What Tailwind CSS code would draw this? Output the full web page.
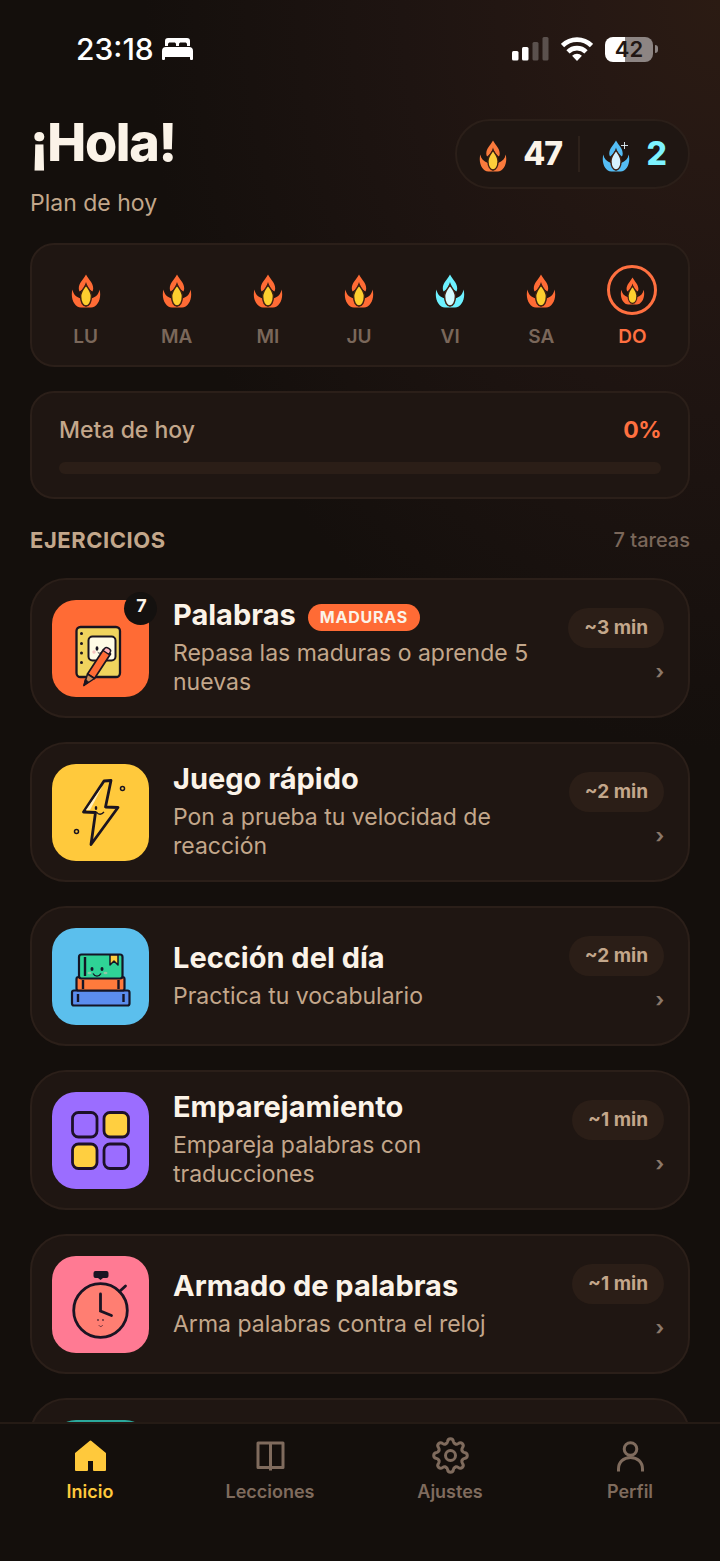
<!DOCTYPE html>
<html lang="es">
<head>
<meta charset="utf-8">
<meta name="viewport" content="width=device-width, initial-scale=1">
<title>Plan de hoy</title>
<script src="https://cdn.jsdelivr.net/npm/@tailwindcss/browser@4"></script>
</head>
<body class="flex h-dvh flex-col overflow-hidden bg-[#140f0c] bg-[radial-gradient(ellipse_80%_48%_at_100%_0%,#2b1b13_0%,#261813_22%,#1e1411_55%,#140f0c_100%)] font-['Inter','Liberation_Sans',sans-serif] text-[#fbf3e8]">

<svg class="hidden" aria-hidden="true">
  <symbol id="flame" viewBox="0 0 30 34">
    <path fill="currentColor" d="M15 .5C12 6 7.800 9 7.800 14.500c0 1.200.3 2.200.9 3C12 15.500 14 12.500 15 8c1 4.500 3 7.500 6.300 9.500.6-.8.9-1.800.9-3C22.200 9 18 6 15 .5Z"/>
    <path fill="currentColor" d="M1.500 15.500C-1 24 3.500 33.500 10 33.500h10c6.500 0 11-9.500 8.500-18-.6 4.500-3.500 7.500-8 9L15 33l-5.500-8.500c-4.500-1.500-7.400-4.500-8-9Z"/>
    <path d="M15 11c2.300 3.500 5.400 6.500 5.400 11.500 0 5.500-2.300 9.500-5.400 9.500s-5.400-4-5.400-9.500c0-5 3.100-8 5.400-11.500Z" stroke="#3f2012" stroke-width="1.500"/>
  </symbol>
</svg>

<header class="flex h-24 shrink-0 items-center justify-between pt-0.5 pr-[62px] pl-[76px] text-white">
  <div class="flex items-center gap-2">
    <time class="text-[30px] leading-9 font-medium">23:18</time>
    <svg class="h-[22px] w-[31px]" viewBox="0 0 31 22" fill="#fff" role="img" aria-label="Modo descanso">
      <path d="M3 8V3a3 3 0 0 1 3-3h19a3 3 0 0 1 3 3v5h-3V6.500C25 5 24 4.500 23 4.500h-4c-1.200 0-2 .5-2 2V8h-3V6.500c0-1.500-.8-2-2-2H8c-1 0-2 .5-2 2V8Z"/>
      <path d="M4 9h23a4 4 0 0 1 4 4v8a1 1 0 0 1-1 1h-1a1 1 0 0 1-1-1v-2H3v2a1 1 0 0 1-1 1H1a1 1 0 0 1-1-1v-8a4 4 0 0 1 4-4Z"/>
    </svg>
  </div>
  <div class="flex items-center gap-3">
    <svg class="h-6 w-[37px]" viewBox="0 0 37 24" fill="#fff" role="img" aria-label="Cobertura">
      <rect x="0" y="14" width="6.500" height="9.500" rx="1.500"/><rect x="10" y="10" width="6.500" height="13.500" rx="1.500"/>
      <rect x="20.500" y="5" width="6" height="18.500" rx="1.500" opacity=".25"/><rect x="30.500" y="0" width="6" height="23.500" rx="1.500" opacity=".25"/>
    </svg>
    <svg class="h-6 w-8" viewBox="0 0 32 24" fill="none" stroke="#fff" stroke-width="4.600" role="img" aria-label="Wifi">
      <path d="M1.500 8.600a20.500 20.500 0 0 1 29 0"/><path d="M7 14.800a12.800 12.800 0 0 1 18 0"/>
      <path d="M16 24l-4.900-5.300a7 7 0 0 1 9.800 0Z" fill="#fff" stroke="none"/>
    </svg>
    <div class="flex items-center gap-0.5">
      <span class="flex h-[25px] w-12 items-center justify-center rounded-lg bg-[linear-gradient(90deg,#fff_42%,#8d8583_42%)] text-[22px] leading-6 font-semibold text-[#211714]">42</span>
      <span class="h-2 w-[3px] rounded-r-full bg-[#8d8583]"></span>
    </div>
  </div>
</header>

<main class="min-h-0 flex-1 overflow-y-auto px-[30px] pt-[23px] [scrollbar-width:none]">
  <div class="flex items-start justify-between">
    <div>
      <h1 class="text-[52px] leading-12 font-extrabold tracking-tight">¡Hola!</h1>
      <p class="mt-5 text-[23px] leading-8 text-[#c3a78b]">Plan de hoy</p>
    </div>
    <div class="flex h-[70px] items-center rounded-full border-2 border-[#2b1f19] bg-[#1f1612] px-[22px] text-[32px] leading-10 font-extrabold tracking-tight">
      <svg class="mt-1 h-8 w-7 text-[#fb7a3c]" fill="#fdcf3b" aria-hidden="true"><use href="#flame"/></svg>
      <span class="ml-4">47</span>
      <span class="mx-4 h-9 w-0.5 bg-[#2d211a]"></span>
      <span class="relative mt-1 ml-1.5">
        <svg class="h-8 w-7 text-[#54bdf5]" fill="#d5f2ff" aria-hidden="true"><use href="#flame"/></svg>
        <svg class="absolute top-0.5 right-0.5 size-[7px]" viewBox="0 0 8 8" stroke="#e9f8ff" aria-hidden="true"><path d="M4 0v8M0 4h8"/></svg>
      </span>
      <span class="ml-4 text-[#7df3ff]">2</span>
    </div>
  </div>

  <section aria-label="Racha semanal" class="mt-6 rounded-[24px] border-2 border-[#2b1f19] bg-[#1f1612] pt-5 pr-2.5 pb-4 pl-2">
    <ol class="grid grid-cols-7 text-center text-[19px] leading-6 font-semibold text-[#7a675a]">
      <li class="flex flex-col items-center gap-2.5"><span class="flex size-[50px] items-center justify-center pt-0.5"><svg class="h-[34px] w-[30px] text-[#ff6b35]" fill="#fdcf2f" aria-hidden="true"><use href="#flame"/></svg></span>LU</li>
      <li class="flex flex-col items-center gap-2.5"><span class="flex size-[50px] items-center justify-center pt-0.5"><svg class="h-[34px] w-[30px] text-[#ff6b35]" fill="#fdcf2f" aria-hidden="true"><use href="#flame"/></svg></span>MA</li>
      <li class="flex flex-col items-center gap-2.5"><span class="flex size-[50px] items-center justify-center pt-0.5"><svg class="h-[34px] w-[30px] text-[#ff6b35]" fill="#fdcf2f" aria-hidden="true"><use href="#flame"/></svg></span>MI</li>
      <li class="flex flex-col items-center gap-2.5"><span class="flex size-[50px] items-center justify-center pt-0.5"><svg class="h-[34px] w-[30px] text-[#ff6b35]" fill="#fdcf2f" aria-hidden="true"><use href="#flame"/></svg></span>JU</li>
      <li class="flex flex-col items-center gap-2.5"><span class="flex size-[50px] items-center justify-center pt-0.5"><svg class="h-[34px] w-[30px] text-[#6df1ff]" fill="#d4fbff" aria-hidden="true"><use href="#flame"/></svg></span>VI</li>
      <li class="flex flex-col items-center gap-2.5"><span class="flex size-[50px] items-center justify-center pt-0.5"><svg class="h-[34px] w-[30px] text-[#ff6b35]" fill="#fdcf2f" aria-hidden="true"><use href="#flame"/></svg></span>SA</li>
      <li class="flex flex-col items-center gap-2.5 text-[#ff7040]"><span class="flex size-[50px] items-center justify-center rounded-full border-3 border-[#ff7040] pt-0.5"><svg class="h-7 w-[25px] text-[#ff6b35]" fill="#fdcf2f" aria-hidden="true"><use href="#flame"/></svg></span>DO</li>
    </ol>
  </section>

  <section class="mt-6 rounded-[24px] border-2 border-[#2b1f19] bg-[#1f1612] px-[27px] pt-[21px] pb-[23px]">
    <div class="flex items-center justify-between text-[23px] leading-8">
      <h2 id="goal" class="font-medium text-[#c3a78b]">Meta de hoy</h2>
      <span class="font-bold tracking-tight text-[#ff7040]">0%</span>
    </div>
    <div role="progressbar" aria-labelledby="goal" aria-valuenow="0" aria-valuemin="0" aria-valuemax="100" class="mt-4 h-3 rounded-full bg-[#2b1e17]"></div>
  </section>

  <div class="mt-[25px] flex items-center justify-between leading-8">
    <h2 class="text-[22px] font-bold tracking-wide text-[#c3a78b]">EJERCICIOS</h2>
    <span class="text-xl font-medium text-[#7a675a]">7 tareas</span>
  </div>

  <ul class="mt-[22px] flex flex-col gap-6">
    <li>
      <a href="#palabras" class="flex min-h-[140px] items-center gap-6 rounded-[36px] border-2 border-[#2b1f19] bg-[#1f1612] pr-6 pl-5">
        <span class="relative size-[97px] shrink-0 rounded-[24px] bg-[#ff6b35]">
          <svg class="size-full" viewBox="0 0 97 97" aria-hidden="true" stroke="#1a1420" stroke-linejoin="round" stroke-linecap="round">
            <rect x="24.500" y="27" width="43.500" height="50" rx="4" fill="#f0d45e" stroke-width="2.300"/>
            <g fill="#1a1420" stroke="none"><circle cx="29.500" cy="33.500" r="1.500"/><circle cx="29.500" cy="43.500" r="1.500"/><circle cx="29.500" cy="53" r="1.500"/><circle cx="29.500" cy="62.500" r="1.500"/></g>
            <rect x="36.500" y="36.500" width="27" height="24" rx="4" fill="#fffbe6" stroke-width="2"/>
            <ellipse cx="45" cy="48.500" rx="1.400" ry="2.200" fill="#1a1420" stroke="none"/><circle cx="42" cy="52" r="1.700" fill="#f7c3c0" stroke="none"/><path d="M46 52.500c1 1 2 1 3 0" fill="none" stroke-width=".9"/>
            <path d="m51.500 49.500 7 4.500-16 24.500-7-4.500Z" fill="#ff6b35" stroke-width="1.700"/>
            <path d="m51 50.500 2-2.500c1.500-1.500 6.500 1.200 5.500 3.500L57 54.500Z" fill="#ffb3ba" stroke-width="1.500"/>
            <path d="m35.500 74 7 4.500L32 85.500Z" fill="#c98a5a" stroke-width="1.500"/><path d="m33.500 79.500 3 2.500-4.500 3.500Z" fill="#1a1420"/>
          </svg>
          <span class="absolute -top-2 -right-2 flex size-[33px] items-start justify-center rounded-full bg-[#14110f] pt-0.5 pl-0.5 text-lg leading-6 font-bold">7</span>
        </span>
        <span class="min-w-0 flex-1 pb-0.5">
          <span class="flex items-center gap-3"><strong class="text-[29px] leading-9 font-bold">Palabras</strong><span class="mt-1 rounded-full bg-[#ff6b35] px-3 text-base leading-[27px] font-bold tracking-wider">MADURAS</span></span>
          <span class="mt-1.5 block text-[23px] leading-[29px] text-[#c3a78b]">Repasa las maduras o aprende 5 nuevas</span>
        </span>
        <span class="flex shrink-0 flex-col items-end gap-3.5 pb-1.5"><span class="rounded-full bg-[#2b1e17] px-4 text-[19px] leading-10 font-bold text-[#c3a78b]">~3 min</span><span class="text-xl leading-5 font-bold text-[#8b7869]">›</span></span>
      </a>
    </li>
    <li>
      <a href="#juego" class="flex min-h-[140px] items-center gap-6 rounded-[36px] border-2 border-[#2b1f19] bg-[#1f1612] pr-6 pl-5">
        <span class="size-[97px] shrink-0 rounded-[24px] bg-[#ffc93c]">
          <svg class="size-full" viewBox="0 0 97 97" aria-hidden="true" fill="none" stroke="#1a1420" stroke-linejoin="round">
            <path d="m52 17 7-.5L53.500 43 66 43.500 39 80.500l4.500-32L31.500 48Z" fill="#ffc93c" stroke-width="2.800"/>
            <path d="M50.500 22 34 46h4Z" fill="#ffefbd" stroke="none"/>
            <ellipse cx="44" cy="44" rx="1.300" ry="2" fill="#1a1420" stroke="none"/><path d="M44.500 48c2 3 5 3 7.500 0" stroke-width="1.300"/>
            <circle cx="70.500" cy="24.500" r="2" stroke-width="1.500"/><circle cx="24.500" cy="67.500" r="2" stroke-width="1.500"/>
          </svg>
        </span>
        <span class="min-w-0 flex-1 pb-0.5">
          <strong class="block text-[29px] leading-9 font-bold">Juego rápido</strong>
          <span class="mt-1.5 block text-[23px] leading-[29px] text-[#c3a78b]">Pon a prueba tu velocidad de reacción</span>
        </span>
        <span class="flex shrink-0 flex-col items-end gap-3.5 pb-1.5"><span class="rounded-full bg-[#2b1e17] px-4 text-[19px] leading-10 font-bold text-[#c3a78b]">~2 min</span><span class="text-xl leading-5 font-bold text-[#8b7869]">›</span></span>
      </a>
    </li>
    <li>
      <a href="#leccion" class="flex min-h-[140px] items-center gap-6 rounded-[36px] border-2 border-[#2b1f19] bg-[#1f1612] pr-6 pl-5">
        <span class="size-[97px] shrink-0 rounded-[24px] bg-[#5bbfed]">
          <svg class="size-full" viewBox="0 0 97 97" aria-hidden="true" stroke="#141526" stroke-width="2.200" stroke-linejoin="round">
            <rect x="20" y="62.500" width="57.500" height="15" rx="2" fill="#5b8def"/><path d="M26 66v8M71.500 66v8" stroke-width="2.400"/>
            <rect x="24.500" y="49" width="48" height="13.500" rx="2" fill="#ff7a3c"/><path d="M31 52v9M66.500 52v9" stroke-width="2.400"/>
            <rect x="27" y="26.500" width="43.500" height="24" rx="2.500" fill="#2fd396"/><path d="M33 29v19" stroke-width="2.400"/>
            <path d="M58 27v10l4-4 4 4V27Z" fill="#ffcf40" stroke-width="1.500"/>
            <g stroke="none"><ellipse cx="40" cy="41" rx="1.500" ry="2" fill="#141526"/><ellipse cx="50" cy="41" rx="1.500" ry="2" fill="#141526"/><ellipse cx="37.500" cy="45" rx="2" ry="1.300" fill="#8fc7a5"/><ellipse cx="53.500" cy="45" rx="2" ry="1.300" fill="#8fc7a5"/></g>
            <path d="M41 45.500c2 3.500 6 3.500 8 0" fill="none" stroke-width="1.400"/>
          </svg>
        </span>
        <span class="min-w-0 flex-1 pb-0.5">
          <strong class="block text-[29px] leading-9 font-bold">Lección del día</strong>
          <span class="mt-1.5 block text-[23px] leading-[29px] text-[#c3a78b]">Practica tu vocabulario</span>
        </span>
        <span class="flex shrink-0 flex-col items-end gap-3.5 pb-1.5"><span class="rounded-full bg-[#2b1e17] px-4 text-[19px] leading-10 font-bold text-[#c3a78b]">~2 min</span><span class="text-xl leading-5 font-bold text-[#8b7869]">›</span></span>
      </a>
    </li>
    <li>
      <a href="#emparejamiento" class="flex min-h-[140px] items-center gap-6 rounded-[36px] border-2 border-[#2b1f19] bg-[#1f1612] pr-6 pl-5">
        <span class="size-[97px] shrink-0 rounded-[24px] bg-[#9b6dff]">
          <svg class="size-full" viewBox="0 0 97 97" aria-hidden="true" fill="none" stroke="#1d1029" stroke-width="2.800">
            <rect x="20.500" y="20.500" width="24.500" height="24.500" rx="6"/><rect x="52" y="20.500" width="24.500" height="24.500" rx="6" fill="#ffcf40"/>
            <rect x="20.500" y="52" width="24.500" height="24.500" rx="6" fill="#ffcf40"/><rect x="52" y="52" width="24.500" height="24.500" rx="6"/>
          </svg>
        </span>
        <span class="min-w-0 flex-1 pb-0.5">
          <strong class="block text-[29px] leading-9 font-bold">Emparejamiento</strong>
          <span class="mt-1.5 block text-[23px] leading-[29px] text-[#c3a78b]">Empareja palabras con traducciones</span>
        </span>
        <span class="flex shrink-0 flex-col items-end gap-3.5 pb-1.5"><span class="rounded-full bg-[#2b1e17] px-4 text-[19px] leading-10 font-bold text-[#c3a78b]">~1 min</span><span class="text-xl leading-5 font-bold text-[#8b7869]">›</span></span>
      </a>
    </li>
    <li>
      <a href="#armado" class="flex min-h-[140px] items-center gap-6 rounded-[36px] border-2 border-[#2b1f19] bg-[#1f1612] pr-6 pl-5">
        <span class="size-[97px] shrink-0 rounded-[24px] bg-[#ff7a93]">
          <svg class="size-full" viewBox="0 0 97 97" aria-hidden="true" fill="none" stroke="#1a1423" stroke-width="2.800" stroke-linecap="round">
            <circle cx="48.500" cy="54.500" r="26.800" fill="#ff7e72"/><path d="M48.500 38v17l11 4.500M67.500 35.500l6-5.500"/>
            <path d="M43.500 15h11a2 2 0 0 1 2 2v3a2 2 0 0 1-2 2H51l-2.500 2-2.500-2h-2.500a2 2 0 0 1-2-2v-3a2 2 0 0 1 2-2Z" fill="#1a1423" stroke="none"/>
            <g fill="#5c2a38" stroke="none"><circle cx="46" cy="64" r=".9"/><circle cx="51" cy="64" r=".9"/></g><path d="M47 69.500c1 1.500 2.500 1.500 3.500 0" stroke-width=".9" stroke="#5c2a38"/>
          </svg>
        </span>
        <span class="min-w-0 flex-1 pb-0.5">
          <strong class="block text-[29px] leading-9 font-bold">Armado de palabras</strong>
          <span class="mt-1.5 block text-[23px] leading-[29px] text-[#c3a78b]">Arma palabras contra el reloj</span>
        </span>
        <span class="flex shrink-0 flex-col items-end gap-3.5 pb-1.5"><span class="rounded-full bg-[#2b1e17] px-4 text-[19px] leading-10 font-bold text-[#c3a78b]">~1 min</span><span class="text-xl leading-5 font-bold text-[#8b7869]">›</span></span>
      </a>
    </li>
    <li>
      <div class="flex min-h-[140px] items-center rounded-[36px] border-2 border-[#2b1f19] bg-[#1f1612] pl-5">
        <span class="size-[97px] rounded-[24px] bg-[#2ba89c]"></span>
      </div>
    </li>
  </ul>
</main>

<nav aria-label="Principal" class="h-[139px] shrink-0 border-t-2 border-[#251b15] bg-[#140f0c] pt-3">
  <ul class="grid grid-cols-4 text-center text-lg leading-6 font-semibold text-[#7f6b5d]">
    <li><a href="#inicio" aria-current="page" class="flex flex-col items-center gap-1 text-[#ffc93c]">
      <svg class="size-10" viewBox="0 0 40 40" fill="currentColor" stroke="currentColor" stroke-width="2" stroke-linejoin="round" aria-hidden="true"><path d="M20.500 5.500 6 17.500v16.500h11V24h7v10h11V17.500Z"/></svg>Inicio</a></li>
    <li><a href="#lecciones" class="flex flex-col items-center gap-1">
      <svg class="size-10" viewBox="0 0 40 40" fill="none" stroke="currentColor" stroke-width="3" stroke-linejoin="round" aria-hidden="true"><path d="M20.500 34.500V7M8 7h25v24.500H8Z"/></svg>Lecciones</a></li>
    <li><a href="#ajustes" class="flex flex-col items-center gap-1">
      <svg class="size-10" viewBox="-20.500 -19.500 40 40" fill="none" stroke="currentColor" stroke-width="3" stroke-linecap="round" aria-hidden="true">
        <circle r="5"/>
        <path id="tooth" d="M-4.800-11.600C-3.500-12.100-3.200-12.600-3-13.800-2.700-16-1.800-16.800 0-16.800S2.700-16 3-13.800C3.200-12.600 3.500-12.100 4.800-11.600"/>
        <use href="#tooth" transform="rotate(45)"/><use href="#tooth" transform="rotate(90)"/><use href="#tooth" transform="rotate(135)"/><use href="#tooth" transform="rotate(180)"/><use href="#tooth" transform="rotate(225)"/><use href="#tooth" transform="rotate(270)"/><use href="#tooth" transform="rotate(315)"/>
      </svg>Ajustes</a></li>
    <li><a href="#perfil" class="flex flex-col items-center gap-1">
      <svg class="size-10" viewBox="0 0 40 40" fill="none" stroke="currentColor" stroke-width="3" aria-hidden="true"><circle cx="20.500" cy="13" r="6.300"/><path d="M8.500 35.500v-2.500c0-7 5-11.500 12-11.500s12 4.500 12 11.500v2.500"/></svg>Perfil</a></li>
  </ul>
</nav>
</body>
</html>
